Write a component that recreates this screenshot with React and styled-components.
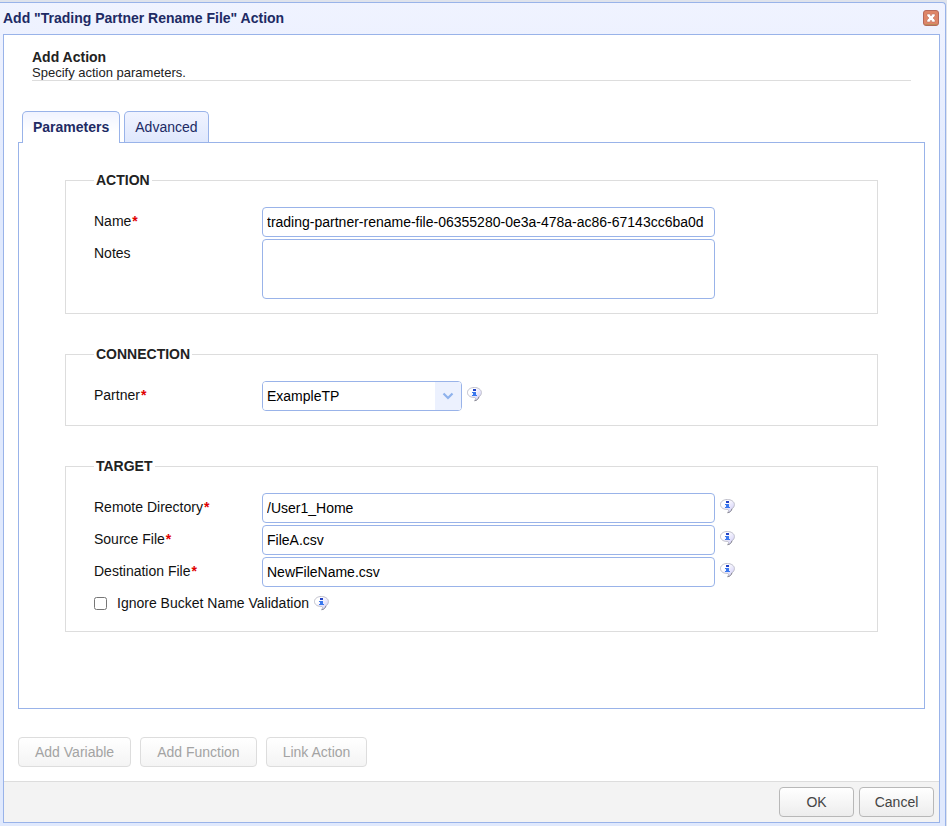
import React, { useState } from 'react';
import styled, { createGlobalStyle } from 'styled-components';

const GlobalStyle = createGlobalStyle`
  * {
    box-sizing: border-box;
  }

  body {
    margin: 0;
    background: #dfe3ec;
  }

  body, button, input, textarea, select {
    font-family: 'Liberation Sans', Arial, sans-serif;
    font-size: 14px;
    line-height: 16px;
  }
`;

const Page = styled.div`
  display: flex;
  min-height: 100vh;
  padding: 2px 1px 0 0;
`;

const Window = styled.div`
  flex: 1;
  min-width: 0;
  display: flex;
  flex-direction: column;
  padding: 0 5px 3px 3px;
  border-top: 1px solid #99b3e9;
  border-right: 1px solid #99b3e9;
  border-radius: 0 4px 0 0;
  background: linear-gradient(#f0f3ff, #e0e9fd 200px);
`;

const TitleBar = styled.header`
  display: flex;
  align-items: center;
  justify-content: space-between;
  height: 31px;
  padding: 0 1px 1px 0;

  h1 {
    margin: 0;
    font-size: 14px;
    color: #202a64;
  }
`;

const CloseButton = styled.button`
  display: flex;
  width: 16px;
  height: 16px;
  padding: 0;
  border: none;
  background: none;
  cursor: pointer;
`;

const Body = styled.main`
  flex: 1;
  display: flex;
  flex-direction: column;
  border: 1px solid #99b3e9;
  background: #fff;
`;

const Intro = styled.div`
  margin: 14px 28px 0;
  border-bottom: 1px solid #ddd;
  color: #222;

  h2 {
    margin: 0;
    font-size: 14px;
  }

  p {
    margin: 0;
    font-size: 13px;
    line-height: 15px;
  }
`;

const TabList = styled.div`
  display: flex;
  gap: 4px;
  margin: 30px 18px 0;
`;

const Tab = styled.button`
  height: 31px;
  padding: 0 10px;
  border: 1px solid #99b3e9;
  border-bottom: none;
  border-radius: 5px 5px 0 0;
  background: ${(props) => (props.$active ? 'linear-gradient(#f0f3ff, #fff 20px)' : 'linear-gradient(#f0f3ff, #dfe8fd)')};
  color: #202a64;
  font-weight: ${(props) => (props.$active ? 'bold' : 'normal')};
  cursor: pointer;

  /* the open tab covers the top line of the panel below */
  ${(props) => props.$active && 'margin-bottom: -1px; height: 32px; padding-bottom: 1px; z-index: 1;'}
`;

const TabPanel = styled.div`
  flex: 1;
  display: flex;
  flex-direction: column;
  gap: 32px;
  margin: 0 14px;
  padding: 29px 46px;
  border: 1px solid #99b3e9;
`;

const Group = styled.fieldset`
  min-width: 0;
  margin: 0;
  padding: 19px 28px 14px;
  border: 1px solid #ddd;

  legend {
    padding: 0 2px;
    color: #222;
    font-weight: bold;
    text-transform: uppercase;
  }
`;

const Rows = styled.div`
  display: flex;
  flex-direction: column;
  gap: 2px;
`;

const Row = styled.div`
  display: flex;
  align-items: flex-start;
`;

const Label = styled.label`
  flex: 0 0 168px;
  padding-top: 6px;
  color: #111;
`;

const Required = styled.span`
  margin-left: 1px;
  color: #e00000;
  font-weight: bold;
`;

const Input = styled.input`
  width: 453px;
  height: 30px;
  padding: 0 4px;
  border: 1px solid #99b3e9;
  border-radius: 4px;
  background: #fff;
  color: #000;
`;

const TextArea = styled.textarea`
  width: 453px;
  height: 60px;
  padding: 4px;
  border: 1px solid #99b3e9;
  border-radius: 4px;
  resize: none;
`;

const SelectBox = styled.div`
  display: grid;
  grid-template-columns: 1fr 26px;
  width: 200px;
  height: 30px;
  border: 1px solid #99b3e9;
  border-radius: 4px;
  overflow: hidden;
`;

const Select = styled.select`
  grid-area: 1 / 1 / 2 / 3;
  appearance: none;
  padding: 0 30px 0 4px;
  border: none;
  background: #fff;
  color: #000;
`;

const SelectArrow = styled.span`
  grid-area: 1 / 2;
  display: flex;
  align-items: center;
  justify-content: center;
  background: #ecf1fe;
  pointer-events: none;
`;

const Hint = styled.span`
  display: flex;
  padding: 6px 5px 0;
`;

const CheckRow = styled.div`
  display: flex;
  align-items: center;
  height: 28px;
  color: #111;

  input {
    width: 13px;
    height: 13px;
    margin: 0 10px 0 0;
  }

  ${Hint} {
    padding-top: 0;
  }
`;

const Button = styled.button`
  height: 30px;
  min-width: 75px;
  padding: 0 ${(props) => (props.$compact ? 14 : 16)}px;
  border: 1px solid #b8b8b8;
  border-radius: 4px;
  background: linear-gradient(#fff, #ededed);
  color: #444;
  cursor: pointer;

  &:disabled {
    border-color: #ddd;
    background: linear-gradient(#fff, #f4f4f4);
    color: #a3a3a3;
    cursor: default;
  }
`;

const Tools = styled.div`
  display: flex;
  gap: 9px;
  margin: 28px 14px 14px;
`;

const Footer = styled.footer`
  display: flex;
  justify-content: flex-end;
  gap: 5px;
  padding: 5px;
  border-top: 1px solid #ddd;
  background: #f3f3f3;
`;

const InfoIcon = () => (
  <Hint>
    <svg width="15" height="15" viewBox="0 0 15 15" role="img" aria-label="Help">
      <defs>
        <linearGradient id="bubble" x1="0" y1="0" x2="1" y2="1">
          <stop offset="0.300" stopColor="#fff" />
          <stop offset="1" stopColor="#cbc6f8" />
        </linearGradient>
      </defs>
      <path
        d="M7.300.500C3.400.500.500 2.600.500 5.500s2.700 4.900 6.300 4.900c1 0 2 .3 1.700 1.500-.1.700-.5 1.300-.9 1.900 2.400-.3 3.900-1.900 4.300-4C13.500 8.800 14.400 7.400 14.400 5.500 14.400 2.600 11.200.500 7.300.500z"
        fill="url(#bubble)"
        stroke="#bdbdc9"
      />
      <path d="M7.700 13.700c2.300-.3 3.800-1.800 4.200-3.900" fill="none" stroke="#8c8c96" />
      <path d="M6 2h3v2H6z" fill="#2443c4" />
      <path d="M5 5h4v3h1v1H5V8h1V6H5z" fill="#3a78ee" />
    </svg>
  </Hint>
);

const CloseIcon = () => (
  <svg width="16" height="16" viewBox="0 0 16 16" aria-hidden="true">
    <rect x=".5" y=".5" width="15" height="15" rx="2.500" fill="#de8668" stroke="#b5695a" />
    <path d="M2 14.500h12" stroke="#b98c58" />
    <path d="M4 4h3l1 2 1-2h3v2l-2 2 2 2v2H9l-1-2-1 2H4v-2l2-2-2-2z" fill="#fff" stroke="#b5695a" strokeWidth=".5" />
  </svg>
);

const TextRow = ({ id, label, value, onChange, hint }) => (
  <Row>
    <Label htmlFor={id}>
      {label}
      <Required>*</Required>
    </Label>
    <Input id={id} type="text" value={value} onChange={onChange} required />
    {hint && <InfoIcon />}
  </Row>
);

const App = () => {
  const [tab, setTab] = useState('parameters');
  const [form, setForm] = useState({
    name: 'trading-partner-rename-file-06355280-0e3a-478a-ac86-67143cc6ba0d',
    notes: '',
    partner: 'ExampleTP',
    directory: '/User1_Home',
    source: 'FileA.csv',
    destination: 'NewFileName.csv',
    ignoreBucket: false
  });

  const update = (key) => (e) => setForm({ ...form, [key]: e.target.value });

  return (
    <Page>
      <GlobalStyle />
      <Window>
        <TitleBar>
          <h1>Add "Trading Partner Rename File" Action</h1>
          <CloseButton type="button" aria-label="Close">
            <CloseIcon />
          </CloseButton>
        </TitleBar>

        <Body>
          <Intro>
            <h2>Add Action</h2>
            <p>Specify action parameters.</p>
          </Intro>

          <TabList role="tablist">
            <Tab
              type="button"
              role="tab"
              aria-selected={tab === 'parameters'}
              $active={tab === 'parameters'}
              onClick={() => setTab('parameters')}
            >
              Parameters
            </Tab>
            <Tab
              type="button"
              role="tab"
              aria-selected={tab === 'advanced'}
              $active={tab === 'advanced'}
              onClick={() => setTab('advanced')}
            >
              Advanced
            </Tab>
          </TabList>

          <TabPanel role="tabpanel">
            {tab === 'parameters' && (
              <>
                <Group>
                  <legend>Action</legend>
                  <Rows>
                    <TextRow id="name" label="Name" value={form.name} onChange={update('name')} />
                    <Row>
                      <Label htmlFor="notes">Notes</Label>
                      <TextArea id="notes" value={form.notes} onChange={update('notes')} />
                    </Row>
                  </Rows>
                </Group>

                <Group>
                  <legend>Connection</legend>
                  <Row>
                    <Label htmlFor="partner">
                      Partner<Required>*</Required>
                    </Label>
                    <SelectBox>
                      <Select id="partner" value={form.partner} onChange={update('partner')}>
                        <option>ExampleTP</option>
                      </Select>
                      <SelectArrow>
                        <svg width="12" height="8" viewBox="0 0 12 8" aria-hidden="true">
                          <path d="M1.500 1.500L6 6l4.500-4.500" fill="none" stroke="#8fb2ec" strokeWidth="2.200" />
                        </svg>
                      </SelectArrow>
                    </SelectBox>
                    <InfoIcon />
                  </Row>
                </Group>

                <Group>
                  <legend>Target</legend>
                  <Rows>
                    <TextRow id="directory" label="Remote Directory" value={form.directory} onChange={update('directory')} hint />
                    <TextRow id="source" label="Source File" value={form.source} onChange={update('source')} hint />
                    <TextRow id="destination" label="Destination File" value={form.destination} onChange={update('destination')} hint />
                    <CheckRow>
                      <input
                        type="checkbox"
                        id="ignore-bucket"
                        checked={form.ignoreBucket}
                        onChange={(e) => setForm({ ...form, ignoreBucket: e.target.checked })}
                      />
                      <label htmlFor="ignore-bucket">Ignore Bucket Name Validation</label>
                      <InfoIcon />
                    </CheckRow>
                  </Rows>
                </Group>
              </>
            )}
          </TabPanel>

          <Tools>
            <Button type="button" disabled>Add Variable</Button>
            <Button type="button" disabled>Add Function</Button>
            <Button type="button" disabled>Link Action</Button>
          </Tools>

          <Footer>
            <Button type="button" $compact>OK</Button>
            <Button type="button" $compact>Cancel</Button>
          </Footer>
        </Body>
      </Window>
    </Page>
  );
};

export default App;
